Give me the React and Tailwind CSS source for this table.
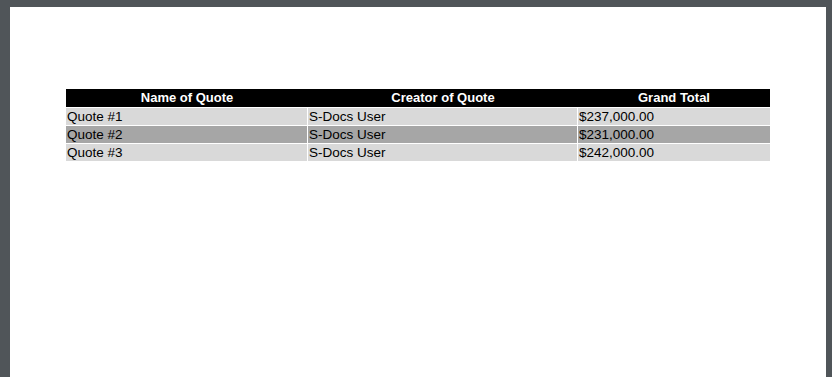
const quotes = [
  { name: "Quote #1", creator: "S-Docs User", total: "$237,000.00" },
  { name: "Quote #2", creator: "S-Docs User", total: "$231,000.00" },
  { name: "Quote #3", creator: "S-Docs User", total: "$242,000.00" },
];

export default function App() {
  return (
    <div className="h-[377px] w-[832px] overflow-hidden bg-[#505559] pt-[7px] pl-[10px] pr-[6px] font-['Liberation_Sans',Arial,sans-serif]">
      <div className="h-full bg-white pl-[56px] pt-[82px]">
        <div className="w-[704px]">
          <div className="grid grid-cols-[242px_270px_192px] bg-black text-[13px] font-bold leading-[18px] text-white">
            <div className="text-center">Name of Quote</div>
            <div className="text-center">Creator of Quote</div>
            <div className="text-center">Grand Total</div>
          </div>
          <div className="mt-px flex flex-col gap-px">
            {quotes.map((q, i) => (
              <div
                key={q.name}
                className="grid grid-cols-[241px_269px_192px] gap-x-px text-[13.5px] leading-[17px] text-black"
              >
                <div className={`${i % 2 ? "bg-[#a6a6a6]" : "bg-[#d9d9d9]"} pl-px`}>{q.name}</div>
                <div className={`${i % 2 ? "bg-[#a6a6a6]" : "bg-[#d9d9d9]"} pl-px`}>{q.creator}</div>
                <div className={`${i % 2 ? "bg-[#a6a6a6]" : "bg-[#d9d9d9]"} pl-px`}>{q.total}</div>
              </div>
            ))}
          </div>
        </div>
      </div>
    </div>
  );
}
